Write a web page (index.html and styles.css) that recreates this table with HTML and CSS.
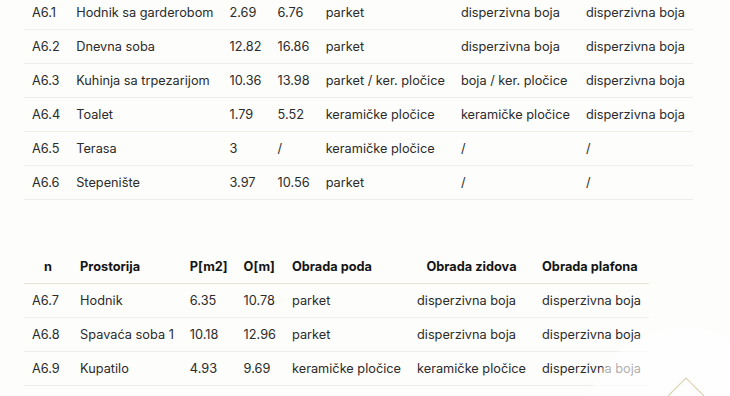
FILE: index.html
```html
<!DOCTYPE html>
<html lang="sr">
<head>
<meta charset="utf-8">
<title>Prostorije</title>
<link rel="stylesheet" href="styles.css">
</head>
<body>
<main class="page">
  <section class="block block-top">
    <table class="rooms">
      <tbody>
        <tr><td>A6.1</td><td>Hodnik sa garderobom</td><td>2.69</td><td>6.76</td><td>parket</td><td>disperzivna boja</td><td>disperzivna boja</td></tr>
        <tr><td>A6.2</td><td>Dnevna soba</td><td>12.82</td><td>16.86</td><td>parket</td><td>disperzivna boja</td><td>disperzivna boja</td></tr>
        <tr><td>A6.3</td><td>Kuhinja sa trpezarijom</td><td>10.36</td><td>13.98</td><td>parket / ker. pločice</td><td>boja / ker. pločice</td><td>disperzivna boja</td></tr>
        <tr><td>A6.4</td><td>Toalet</td><td>1.79</td><td>5.52</td><td>keramičke pločice</td><td>keramičke pločice</td><td>disperzivna boja</td></tr>
        <tr><td>A6.5</td><td>Terasa</td><td>3</td><td>/</td><td>keramičke pločice</td><td>/</td><td>/</td></tr>
        <tr><td>A6.6</td><td>Stepenište</td><td>3.97</td><td>10.56</td><td>parket</td><td>/</td><td>/</td></tr>
      </tbody>
    </table>
  </section>

  <section class="block block-bottom">
    <table class="rooms">
      <thead>
        <tr><th class="th-center">n</th><th>Prostorija</th><th>P[m2]</th><th>O[m]</th><th>Obrada poda</th><th class="th-center">Obrada zidova</th><th>Obrada plafona</th></tr>
      </thead>
      <tbody>
        <tr><td>A6.7</td><td>Hodnik</td><td>6.35</td><td>10.78</td><td>parket</td><td>disperzivna boja</td><td>disperzivna boja</td></tr>
        <tr><td>A6.8</td><td>Spavaća soba 1</td><td>10.18</td><td>12.96</td><td>parket</td><td>disperzivna boja</td><td>disperzivna boja</td></tr>
        <tr><td>A6.9</td><td>Kupatilo</td><td>4.93</td><td>9.69</td><td>keramičke pločice</td><td>keramičke pločice</td><td>disperzivna boja</td></tr>
        <tr><td>A6.10</td><td>Terasa</td><td>4.12</td><td>/</td><td>keramičke pločice</td><td>/</td><td>/</td></tr>
      </tbody>
    </table>
  </section>
</main>

<a class="to-top" href="#" aria-label="Nazad na vrh">
  <svg class="to-top-icon" width="40" height="24" viewBox="0 0 40 24" aria-hidden="true">
    <path d="M1 24 L19 6 L37 24" fill="none" stroke="#ddd2b2" stroke-width="1.2"/>
  </svg>
</a>
</body>
</html>
```

FILE: styles.css
```css
html, body {
  margin: 0;
  padding: 0;
}

body {
  background: #fdfdfb;
  font-family: Inter, "Noto Sans", "Liberation Sans", sans-serif;
  font-size: 12.75px;
  color: #2b2b2b;
  overflow: hidden;
  height: 396px;
}

.page {
  display: flex;
  flex-direction: column;
  align-items: flex-start;
  gap: 50px;
  padding-left: 24px;
}

.block-top {
  margin-top: -4px;
}

.rooms {
  border-collapse: collapse;
}

.rooms td,
.rooms th {
  padding: 8px 8px;
  line-height: 17px;
  white-space: nowrap;
}

.rooms td {
  text-align: left;
  border-bottom: 1px solid #eeeee9;
}

.rooms th {
  text-align: left;
  font-weight: 700;
  color: #151515;
  border-bottom: 1px solid #e6e2cf;
}

.rooms th.th-center {
  text-align: center;
}

.to-top {
  position: fixed;
  right: 0;
  bottom: 0;
  width: 150px;
  height: 72px;
  display: flex;
  align-items: flex-end;
  justify-content: flex-end;
  padding-right: 23px;
  box-sizing: border-box;
  background: radial-gradient(circle at 106px 106px, rgba(255,255,255,0.62) 0, rgba(255,255,255,0.62) 100px, rgba(255,255,255,0) 106px);
}

.to-top-icon {
  display: block;
}
```
